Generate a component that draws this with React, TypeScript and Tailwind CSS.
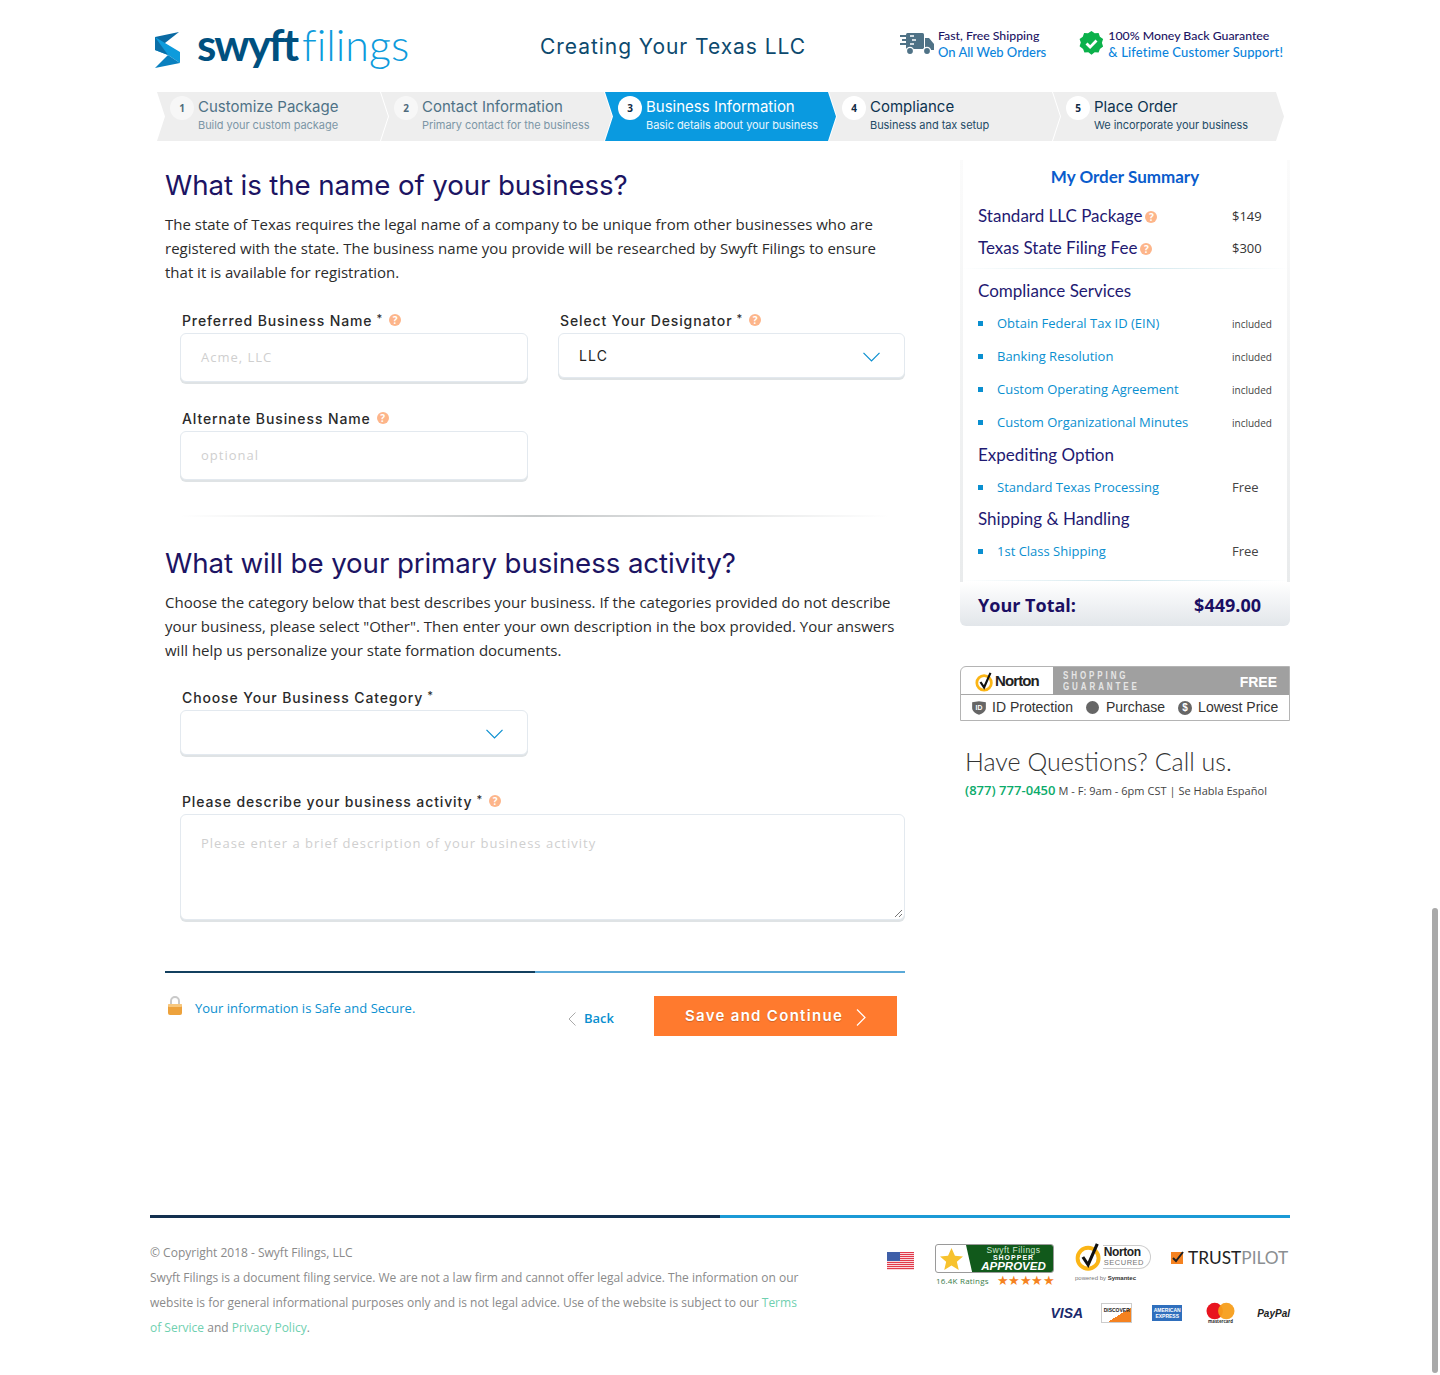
import React from 'react';

const steps = [
  { n: 1, title: 'Customize Package', sub: 'Build your custom package', state: 'done' },
  { n: 2, title: 'Contact Information', sub: 'Primary contact for the business', state: 'done' },
  { n: 3, title: 'Business Information', sub: 'Basic details about your business', state: 'active' },
  { n: 4, title: 'Compliance', sub: 'Business and tax setup', state: 'todo' },
  { n: 5, title: 'Place Order', sub: 'We incorporate your business', state: 'todo' },
];

const Help = ({ className = '' }: { className?: string }) => (
  <span className={`inline-flex w-[12px] h-[12px] rounded-full bg-[#fdb58a] text-white text-[10px] font-bold leading-none items-center justify-center font-['Open_Sans',sans-serif] ${className}`}>?</span>
);

const Label = ({ text, star, help, gap = 'ml-[6px]' }: { text: string; star?: boolean; help?: boolean; gap?: string }) => (
  <div className="h-[20px] pl-[2px] flex items-center text-[14px] tracking-[0.88px] text-[#2a2a2a] font-medium font-['Inter',sans-serif]">
    <span>{text}</span>
    {star && <span className="ml-[4px] text-[11px] -mt-1">*</span>}
    {help && <Help className={`${gap} tracking-normal`} />}
  </div>
);

const boxStyle = 'bg-white rounded-[6px] border border-[#e3e9ef] shadow-[0_2px_0_#dfe3e5]';

const TextBox = ({ placeholder }: { placeholder: string }) => (
  <div className={`${boxStyle} w-[348px] h-[49px] flex items-center pl-[20px] text-[13px] tracking-[1px] text-[#cfcfcf] font-['Open_Sans',sans-serif]`}>
    {placeholder}
  </div>
);

const SelectBox = ({ value, width }: { value?: string; width: string }) => (
  <div className={`${boxStyle} ${width} h-[45px] flex items-center justify-between pl-[20px] pr-[24px] text-[14px] tracking-[1.2px] text-[#222] font-['Inter',sans-serif]`}>
    <span>{value}</span>
    <svg width="17" height="10" viewBox="0 0 17 10" fill="none" stroke="#0a8fd0" strokeWidth="1.2" className="mt-[3px]"><path d="M.5.8l8 8 8-8" /></svg>
  </div>
);

const Heading = ({ children }: { children: React.ReactNode }) => (
  <h2 className="h-[36px] flex items-center text-[27.7px] text-[#1c1463] font-normal tracking-[-0.1px] font-['Inter',sans-serif]">{children}</h2>
);

const Para = ({ children }: { children: React.ReactNode }) => (
  <p className="mt-[8px] text-[15px] leading-[24px] text-[#2c2c2c] font-['Open_Sans',sans-serif]">{children}</p>
);

const Logo = () => (
  <div className="flex items-center">
    <svg width="26" height="36" viewBox="0 0 26 36" className="mr-[16px] mt-[8px]">
      <polygon points="0,5 24,0 10,11 0,11" fill="#0a6aa3" />
      <polygon points="0,5 10,11 25,20 25,31 13,23 0,18" fill="#0d9bdc" />
      <polygon points="0,5 13,23 0,18" fill="#0b6fa8" />
      <polygon points="25,31 0,36 13,23" fill="#0a80bf" />
    </svg>
    <span className="-mt-[4px] text-[44px] leading-none font-bold text-[#00507f] font-['Lato',sans-serif] tracking-[-2px]">swyft</span>
    <span className="-mt-[4px] text-[43px] leading-none font-light text-[#0d9bdc] font-['Lato',sans-serif] ml-[5px] [font-variant-ligatures:none]">filings</span>
  </div>
);

const Truck = () => (
  <svg width="34" height="24" viewBox="0 0 34 24" fill="#4f7286">
    <rect x="6" y="1" width="18" height="16" rx="1.5" />
    <path d="M25 6h4l5 6v6h-9z" />
    <g stroke="#fff" strokeWidth="1.4"><path d="M0 4h14M2 8h14M0 12h14" /></g>
    <g stroke="#4f7286" strokeWidth="1.8"><path d="M0 4h10M2 8h10M0 12h10" /></g>
    <circle cx="10" cy="19" r="3.6" stroke="#fff" strokeWidth="1.4" />
    <circle cx="27" cy="19" r="3.6" stroke="#fff" strokeWidth="1.4" />
  </svg>
);

const GreenCheck = () => (
  <svg width="25" height="26" viewBox="0 0 25 26">
    <path d="M12.5 0l3.2 2.3 3.9-.3 1.3 3.7 3.2 2.3-1.2 3.8 1.2 3.8-3.2 2.3-1.3 3.7-3.9-.3-3.2 2.4-3.2-2.4-3.9.3-1.3-3.7L.6 15.3l1.2-3.8L.6 8l3.2-2.3L5.1 2l3.9.3z" fill="#0bb14b" />
    <path d="M7.5 12.5l3.6 3.6 6.4-6.6" fill="none" stroke="#fff" strokeWidth="2.8" />
  </svg>
);

const Header = () => (
  <header className="h-[92px] flex items-center pl-[5px]">
    <div className="w-[360px]"><Logo /></div>
    <div className="w-[310px] ml-[25px] text-[21px] tracking-[0.95px] text-[#0d4a6e] font-['Inter',sans-serif] mt-[1px]">Creating Your Texas LLC</div>
    <div className="flex items-center ml-[50px] -mt-[5px] font-['Lato',sans-serif] text-[13px] leading-[17px] font-medium">
      <Truck />
      <div className="ml-[4px]">
        <div className="text-[12.3px] text-[#1c1463]">Fast, Free Shipping</div>
        <div className="text-[#0a84dc]">On All Web Orders</div>
      </div>
    </div>
    <div className="flex items-center ml-[33px] -mt-[5px] font-['Lato',sans-serif] text-[13px] leading-[17px] font-medium">
      <GreenCheck />
      <div className="ml-[4px]">
        <div className="text-[12.3px] text-[#1c1463]">100% Money Back Guarantee</div>
        <div className="tracking-[0.15px] text-[#0a84dc]">&amp; Lifetime Customer Support!</div>
      </div>
    </div>
  </header>
);

const Stepper = () => (
  <div className="flex pl-[7px] h-[49px]">
    {steps.map((s, i) => {
      const active = s.state === 'active';
      const done = s.state === 'done';
      return (
        <div
          key={s.n}
          className={`w-[231px] h-[49px] shrink-0 flex items-start pt-[4px] pl-[13px] [clip-path:polygon(0_0,calc(100%-8px)_0,100%_50%,calc(100%-8px)_100%,0_100%,8px_50%)] font-['Inter',sans-serif] ${i > 0 ? '-ml-[7px]' : ''} ${active ? 'bg-[#0a9ae0]' : 'bg-[#eeeeee]'}`}
        >
          <div className={`w-[24px] h-[24px] rounded-full flex items-center justify-center text-[10px] font-bold font-['Open_Sans',sans-serif] ${done ? 'bg-[#f7f7f7] text-[#4f6b7c]' : 'bg-white text-[#102a43]'}`}>{s.n}</div>
          <div className="ml-[4px] mt-[1px]">
            <div className={`text-[15px] leading-[20px] font-normal ${active ? 'text-white' : done ? 'text-[#4f7286]' : 'text-[#0c3350]'}`}>{s.title}</div>
            <div className={`text-[11px] leading-[15px] mt-[1px] tracking-[-0.05px] ${active ? 'text-[#e8f6fd]' : done ? 'text-[#7c96a6]' : 'text-[#234b66]'}`}>{s.sub}</div>
          </div>
        </div>
      );
    })}
  </div>
);

const Divider = () => (
  <div className="h-[2px] w-[710px] ml-[15px] bg-gradient-to-r from-transparent via-[#c6c9ca] to-transparent" />
);

const Lock = () => (
  <svg width="16" height="20" viewBox="0 0 16 20">
    <path d="M4 9V5a4 4 0 0 1 8 0v4" fill="none" stroke="#c9c9c9" strokeWidth="2" />
    <rect x="1" y="8" width="14" height="11" rx="2" fill="#eda23c" />
    <rect x="1" y="8" width="14" height="3" rx="1" fill="#f7c77e" />
  </svg>
);

const MainForm = () => (
  <div className="w-[810px] pl-[15px] shrink-0">
    <div className="w-[740px]">
      <div className="h-[27px]" />
      <Heading>What is the name of your business?</Heading>
      <Para>
        The state of Texas requires the legal name of a company to be unique from other businesses who are registered with the state. The business name you provide will be researched by Swyft Filings to ensure that it is available for registration.
      </Para>
      <div className="mt-[26px] pl-[15px] grid grid-cols-[378px_347px]">
        <div>
          <Label text="Preferred Business Name" star help />
          <div className="mt-[3px]"><TextBox placeholder="Acme, LLC" /></div>
        </div>
        <div>
          <Label text="Select Your Designator" star help />
          <div className="mt-[3px]"><SelectBox value="LLC" width="w-[347px]" /></div>
        </div>
      </div>
      <div className="mt-[26px] pl-[15px]">
        <Label text="Alternate Business Name" help />
        <div className="mt-[3px]"><TextBox placeholder="optional" /></div>
      </div>
      <div className="mt-[35px]"><Divider /></div>
      <div className="mt-[29px]"><Heading>What will be your primary business activity?</Heading></div>
      <Para>
        Choose the category below that best describes your business. If the categories provided do not describe your business, please select "Other". Then enter your own description in the box provided. Your answers will help us personalize your state formation documents.
      </Para>
      <div className="mt-[25px] pl-[15px]">
        <Label text="Choose Your Business Category" star />
        <div className="mt-[3px]"><SelectBox width="w-[348px]" /></div>
      </div>
      <div className="mt-[36px] pl-[15px]">
        <Label text="Please describe your business activity" star help />
        <div className={`${boxStyle} mt-[3px] w-[725px] h-[106px] pl-[20px] pt-[19px] text-[13px] leading-[18px] tracking-[1px] text-[#cfcfcf] font-['Open_Sans',sans-serif] relative`}>
          Please enter a brief description of your business activity
          <svg width="9" height="9" viewBox="0 0 9 9" className="absolute right-[1px] bottom-[1px]" stroke="#777" strokeWidth="1"><path d="M1 8L8 1M5 8L8 5" /></svg>
        </div>
      </div>
      <div className="mt-[51px] h-[2px] flex">
        <div className="w-[370px] bg-[#13405f]" />
        <div className="flex-1 bg-[#5aa9d8]" />
      </div>
      <div className="mt-[23px] h-[42px] flex">
        <div className="pl-[2px] flex items-start text-[13px] text-[#0a8fd0] font-['Open_Sans',sans-serif]">
          <Lock />
          <span className="ml-[12px] mt-[3px]">Your information is Safe and Secure.</span>
        </div>
        <div className="ml-auto flex items-start">
          <div className="mt-[13px] flex items-center text-[13px] text-[#0a8fd0] font-semibold font-['Open_Sans',sans-serif]">
            <svg width="8" height="14" viewBox="0 0 8 14" fill="none" stroke="#aaa" strokeWidth="1"><path d="M7.5.5L1 7l6.5 6.5" /></svg>
            <span className="ml-[8px]">Back</span>
          </div>
          <div className="ml-[40px] mr-[8px] w-[243px] h-[40px] bg-[#ff7a2e] flex items-center justify-center text-white text-[15px] font-semibold tracking-[1.3px] font-['Inter',sans-serif] [text-shadow:0_1px_1px_rgba(0,0,0,0.2)]">
            Save and Continue
            <svg width="10" height="17" viewBox="0 0 10 17" fill="none" stroke="#fff" strokeWidth="1.2" className="ml-[13px] mt-[2px]"><path d="M1 .5l8 8-8 8" /></svg>
          </div>
        </div>
      </div>
    </div>
  </div>
);

const Fee = ({ label, price }: { label: string; price: string }) => (
  <div className="h-[32px] flex items-center justify-between pl-[18px] pr-[28px]">
    <span className="flex items-center text-[17px] text-[#1f1a72] font-['Lato',sans-serif]">{label}<Help className="ml-[3px] mt-[2px]" /></span>
    <span className="w-[30px] mt-[1px] text-[13px] text-[#333] font-['Open_Sans',sans-serif]">{price}</span>
  </div>
);

const Group = ({ children, h }: { children: React.ReactNode; h: string }) => (
  <div className={`${h} flex items-center pl-[18px] text-[17px] text-[#1f1a72] font-['Lato',sans-serif]`}>{children}</div>
);

const Item = ({ label, value, small }: { label: string; value: string; small?: boolean }) => (
  <div className="h-[33px] flex items-center pl-[18px] font-['Open_Sans',sans-serif]">
    <span className="w-[5px] h-[5px] bg-[#0a8fd0]" />
    <span className="ml-[14px] w-[235px] text-[13px] text-[#0a8fd0]">{label}</span>
    <span className={small ? 'text-[10px] mt-[2px] text-[#444]' : 'text-[13px] text-[#444]'}>{value}</span>
  </div>
);

const Summary = () => (
  <div className="mt-[19px]">
    <div className="h-[422px] border-x-[3px] border-y-0 [border-image:linear-gradient(to_bottom,#fbfbfb,#e9ebec)_1]">
      <div className="h-[34px] flex items-center justify-center text-[17px] font-bold text-[#0a5ccc] font-['Lato',sans-serif]">My Order Summary</div>
      <div className="-mx-[3px]">
        <div className="h-[6px]" />
        <Fee label="Standard LLC Package" price="$149" />
        <Fee label="Texas State Filing Fee" price="$300" />
        <div className="h-[1px] mt-[4px] bg-gradient-to-r from-transparent via-[#cfe6ec] to-transparent" />
        <Group h="h-[38px] pt-[5px]">Compliance Services</Group>
        <Item label="Obtain Federal Tax ID (EIN)" value="included" small />
        <Item label="Banking Resolution" value="included" small />
        <Item label="Custom Operating Agreement" value="included" small />
        <Item label="Custom Organizational Minutes" value="included" small />
        <Group h="h-[32px]">Expediting Option</Group>
        <Item label="Standard Texas Processing" value="Free" />
        <Group h="h-[31px] pb-[2px]">Shipping &amp; Handling</Group>
        <Item label="1st Class Shipping" value="Free" />
        <div className="h-[1px] mt-[12px] bg-gradient-to-r from-transparent via-[#cfe6ec] to-transparent" />
      </div>
    </div>
    <div className="h-[44px] pt-[2px] rounded-b-[6px] bg-gradient-to-b from-white to-[#e2e6ea] flex items-center justify-between pl-[18px] pr-[29px] text-[18px] font-bold text-[#1b0f63] font-['Open_Sans',sans-serif]">
      <span>Your Total:</span>
      <span>$449.00</span>
    </div>
  </div>
);

const NortonMark = ({ size = 20 }: { size?: number }) => (
  <svg width={size} height={size} viewBox="0 0 22 22">
    <circle cx="10" cy="12" r="8" fill="none" stroke="#fbb516" strokeWidth="3" />
    <path d="M6 11l4 6 7-16" fill="none" stroke="#111" strokeWidth="2.4" />
  </svg>
);

const NortonBox = () => (
  <div className="mt-[40px] h-[55px] w-[330px] border border-[#b4b4b4] rounded-tl-[6px] font-['Liberation_Sans',sans-serif]">
    <div className="h-[28px] flex">
      <div className="w-[92px] flex items-center justify-center border-b border-[#a8a8a8] pt-[2px]">
        <NortonMark />
        <span className="text-[15px] font-bold tracking-[-0.9px] text-[#222]">Norton</span>
      </div>
      <div className="flex-1 bg-[#a0a0a0] flex items-center justify-between pl-[10px] pr-[12px]">
        <div className="text-[8px] leading-[9px] tracking-[2.9px] font-bold text-[#e6e6e6] scale-y-125">SHOPPING<br />GUARANTEE</div>
        <div className="text-[14px] mt-[2px] font-bold text-white">FREE</div>
      </div>
    </div>
    <div className="h-[25px] flex items-center pl-[10px] text-[14px] text-[#333]">
      <svg width="16" height="16" viewBox="0 0 14 14"><path d="M1 2l6-1 6 1v5c0 3-3 5-6 6-3-1-6-3-6-6z" fill="#666" /><text x="7" y="9" fontSize="6" fontWeight="700" fill="#fff" textAnchor="middle">ID</text></svg>
      <span className="ml-[5px]">ID Protection</span>
      <span className="ml-[13px] w-[13px] h-[13px] rounded-full bg-[#666]" />
      <span className="ml-[7px]">Purchase</span>
      <span className="ml-[13px] w-[14px] h-[14px] rounded-full bg-[#666] text-white text-[10px] font-bold flex items-center justify-center">$</span>
      <span className="ml-[6px]">Lowest Price</span>
    </div>
  </div>
);

const Sidebar = () => (
  <aside className="w-[330px] shrink-0">
    <Summary />
    <NortonBox />
    <div className="mt-[24px] pl-[5px] text-[25px] leading-[32px] font-light text-[#333] font-['Lato',sans-serif]">Have Questions? Call us.</div>
    <div className="mt-[3px] pl-[5px] text-[11px] leading-[20px] tracking-[0.03px] text-[#444] font-['Open_Sans',sans-serif]">
      <span className="text-[13px] font-semibold text-[#0bab6b]">(877) 777-0450</span> M - F: 9am - 6pm CST | Se Habla Español
    </div>
  </aside>
);

const Flag = () => (
  <svg width="27" height="18" viewBox="0 0 27 18">
    {[0, 1, 2, 3, 4, 5, 6, 7, 8].map((i) => (
      <rect key={i} x="0" y={i * 2} width="27" height="1.2" fill="#e2394b" />
    ))}
    <rect x="0" y="0" width="13" height="9" fill="#3f5fa8" />
  </svg>
);

const Stars = () => <span className="text-[13px] leading-none tracking-[-0.5px] text-[#f58220]">★★★★★</span>;

const ShopperApproved = () => (
  <div className="w-[119px]">
    <div className="h-[29px] border border-[#9a9a9a] rounded-[3px] flex overflow-hidden">
      <div className="w-[30px] flex items-center justify-center">
        <svg width="23" height="22" viewBox="0 0 24 23"><path d="M12 0l3.6 8 8.4.8-6.4 5.6 2 8.6L12 18.4 4.4 23l2-8.6L0 8.8 8.4 8z" fill="#f7c22e" /></svg>
      </div>
      <div className="flex-1 bg-[#11591b] [clip-path:polygon(0_0,100%_0,100%_100%,7%_100%)] flex flex-col items-center justify-center text-white pl-[8px] font-['Liberation_Sans',sans-serif]">
        <div className="text-[8.5px] leading-[8px] tracking-[0.5px] text-[#cfe8cf]">Swyft Filings</div>
        <div className="text-[7px] leading-[7px] font-bold tracking-[1px]">SHOPPER</div>
        <div className="text-[11.5px] leading-[11px] font-bold italic">APPROVED</div>
      </div>
    </div>
    <div className="flex items-center justify-between mt-[1px] pl-[1px]">
      <span className="text-[8px] tracking-[0.2px] text-[#3b7d4a] font-['Open_Sans',sans-serif]">16.4K Ratings</span>
      <Stars />
    </div>
  </div>
);

const NortonSecured = () => (
  <div className="w-[76px] -mt-[3px]">
    <div className="flex items-center h-[32px]">
      <NortonMark size={30} />
      <div className="-ml-[1px] h-[24px] flex flex-col justify-center pl-[1px] pr-[6px] border border-l-0 border-[#ccc] rounded-r-full font-['Liberation_Sans',sans-serif]">
        <div className="text-[12px] leading-[11px] font-bold tracking-[-0.4px] text-[#222]">Norton</div>
        <div className="text-[7.5px] leading-[9px] tracking-[0.5px] text-[#777]">SECURED</div>
      </div>
    </div>
    <div className="text-[6px] leading-[8px] mt-[1px] text-[#777] font-['Liberation_Sans',sans-serif]">powered by <b className="text-[#333]">Symantec</b></div>
  </div>
);

const TrustPilot = () => (
  <div className="flex items-center">
    <svg width="13" height="13" viewBox="0 0 13 13">
      <rect x="0" y="1" width="12" height="12" fill="#f58220" />
      <path d="M2 7l3 3 7-9" fill="none" stroke="#222" strokeWidth="2" />
    </svg>
    <span className="ml-[4px] text-[17.3px] text-[#222] font-['Lato',sans-serif]">TRUST<span className="text-[#8b8f92]">PILOT</span></span>
  </div>
);

const Payments = () => (
  <div className="flex items-center justify-end">
    <span className="text-[14px] font-bold italic text-[#1a2a6c] font-['Liberation_Sans',sans-serif]">VISA</span>
    <div className="ml-[18px] w-[31px] h-[20px] border border-[#ccc] bg-gradient-to-br from-white from-60% to-[#f58220] to-60% text-[5px] font-bold text-[#222] text-center leading-[12px] font-['Liberation_Sans',sans-serif]">DISCOVER</div>
    <div className="ml-[20px] w-[30px] h-[16px] bg-[#2f6fbd] text-[5px] leading-[6px] font-bold text-white text-center pt-[2px] font-['Liberation_Sans',sans-serif]">AMERICAN EXPRESS</div>
    <svg className="ml-[24px]" width="29" height="22" viewBox="0 0 30 22">
      <circle cx="9" cy="9" r="8.5" fill="#e8141f" />
      <circle cx="21" cy="9" r="8.5" fill="#f79e1b" fillOpacity="0.95" />
      <text x="15" y="21.5" fontSize="4.5" textAnchor="middle" fill="#333" fontWeight="700">mastercard</text>
    </svg>
    <span className="ml-[22px] text-[10px] font-bold italic text-[#222] font-['Liberation_Sans',sans-serif]">PayPal</span>
  </div>
);

const Footer = () => (
  <footer>
    <div className="h-[3px] flex">
      <div className="w-[570px] bg-[#13304f]" />
      <div className="flex-1 bg-[#1b9ad6]" />
    </div>
    <div className="flex justify-between mt-[22px]">
      <div className="w-[652px] text-[12px] leading-[25px] text-[#8a8a8a] font-['Open_Sans',sans-serif]">
        <div>© Copyright 2018 - Swyft Filings, LLC</div>
        <div>
          Swyft Filings is a document filing service. We are not a law firm and cannot offer legal advice. The information on our website is for general informational purposes only and is not legal advice. Use of the website is subject to our <span className="text-[#6fd0b0]">Terms</span> <span className="text-[#6fd0b0]">of Service</span> and <span className="text-[#6fd0b0]">Privacy Policy</span>.
        </div>
      </div>
      <div className="w-[403px] mt-[4px]">
        <div className="h-[42px] flex items-start">
          <div className="mt-[8px]"><Flag /></div>
          <div className="ml-[21px]"><ShopperApproved /></div>
          <div className="ml-[21px]"><NortonSecured /></div>
          <div className="ml-[20px] mt-[1px]"><TrustPilot /></div>
        </div>
        <div className="mt-[16px]"><Payments /></div>
      </div>
    </div>
  </footer>
);

export default function App() {
  return (
    <div className="relative h-[1375px] bg-white overflow-hidden">
      <div className="w-[1140px] ml-[150px]">
        <Header />
        <Stepper />
        <div className="flex">
          <MainForm />
          <Sidebar />
        </div>
        <div className="mt-[177px]">
          <Footer />
        </div>
      </div>
      {/* overlay scrollbar */}
      <div className="absolute right-[2px] top-[908px] w-[6px] h-[465px] rounded-full bg-[#a9a9a9]" />
    </div>
  );
}
